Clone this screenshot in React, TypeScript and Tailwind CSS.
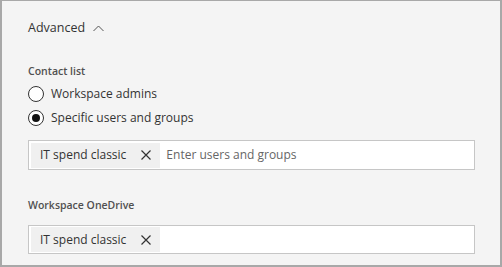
import React from "react";

const font = { fontFamily: '"Open Sans", "Noto Sans", sans-serif' };

function XIcon() {
  return (
    <svg width="10" height="10" viewBox="0 0 10 10" className="block">
      <path d="M0.5 0.5 L9.5 9.5 M9.5 0.5 L0.5 9.5" stroke="#333" strokeWidth="1.2" fill="none" />
    </svg>
  );
}

function Chip() {
  return (
    <div className="flex items-center h-[25px] bg-[#f0f0f0] pl-[9px] pr-[9px]">
      <span className="text-[12px] text-[#333] leading-none">IT spend classic</span>
      <span className="ml-[15px]"><XIcon /></span>
    </div>
  );
}

function Radio({ checked, label }: { checked?: boolean; label: string }) {
  return (
    <div className="flex items-center h-[24px]">
      <div className="w-[16px] h-[16px] rounded-full border border-[#333] bg-white flex items-center justify-center">
        {checked && <div className="w-[8px] h-[8px] rounded-full bg-[#111]" />}
      </div>
      <span className="ml-[7px] text-[12px] text-[#333]">{label}</span>
    </div>
  );
}

export default function App() {
  return (
    <div
      style={font}
      className="w-[502px] h-[267px] bg-[#f4f4f4] border-l-2 border-t border-r-2 border-b-2 border-[#a8a8a8] pl-[26px] pr-[25px] overflow-hidden"
    >
      <div className="flex items-center h-[20px] mt-[17px]">
        <span className="text-[12.5px] text-[#333]">Advanced</span>
        <svg width="11" height="7" viewBox="0 0 11 7" className="ml-[8px]">
          <path d="M0.5 6 L5.5 1 L10.5 6" stroke="#555" strokeWidth="1" fill="none" />
        </svg>
      </div>
      <div className="mt-[26px] h-[16px] flex items-center text-[10.5px] font-semibold text-[#505050]">
        Contact list
      </div>
      <div className="mt-[2px]">
        <Radio label="Workspace admins" />
        <Radio checked label="Specific users and groups" />
      </div>
      <div className="mt-[10px] h-[30px] bg-white border border-[#c6c6c6] flex items-center px-[2px]">
        <Chip />
        <span className="ml-[6px] text-[12px] text-[#666]">Enter users and groups</span>
      </div>
      <div className="mt-[28px] h-[16px] flex items-center text-[10.5px] font-semibold text-[#505050]">
        Workspace OneDrive
      </div>
      <div className="mt-[11px] h-[29px] bg-white border border-[#c6c6c6] flex items-center px-[2px]">
        <Chip />
      </div>
    </div>
  );
}
